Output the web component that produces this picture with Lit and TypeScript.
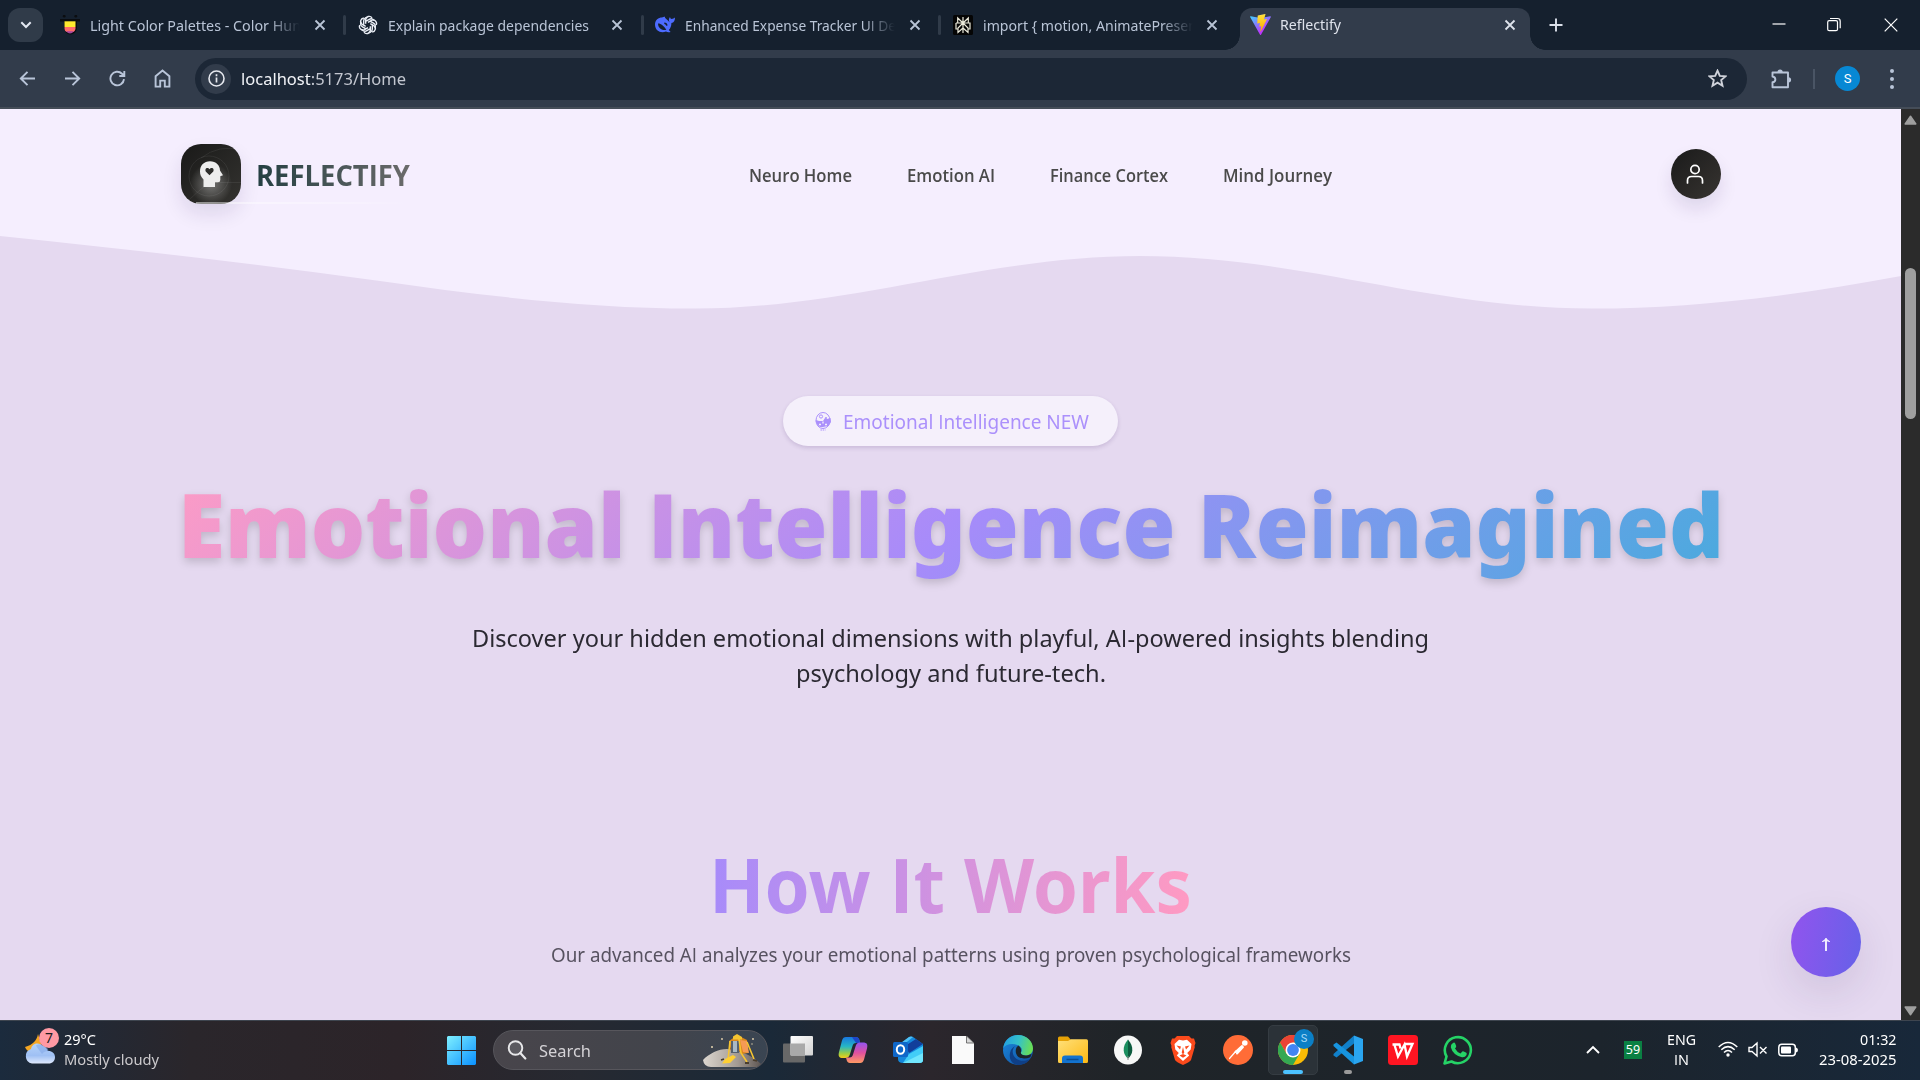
import { LitElement, html, css, svg } from "lit";
import { customElement, property } from "lit/decorators.js";

/** A single line of text set to an exact width. */
@customElement("fit-text")
class FitText extends LitElement {
  @property({ type: Number }) w = 0;
  static styles = css`
    :host {
      display: block;
      flex: none;
      width: max-content;
      white-space: nowrap;
      transform-origin: 0 50%;
    }
  `;
  render() {
    return html`<slot></slot>`;
  }
  firstUpdated() {
    const natural = this.getBoundingClientRect().width;
    if (!this.w || !natural) return;
    this.style.transform = `scaleX(${this.w / natural})`;
    this.style.marginRight = `${this.w - natural}px`;
  }
}

/** Sets every capital I without serifs. */
const plainI = (text: string) =>
  text.split(/(I)/).map((part) => (part === "I" ? html`<span class="cap">I</span>` : part));

const closeIcon = html`<svg class="x" width="12" height="12" viewBox="0 0 12 12"><path d="M1.5 1.5l9 9M10.5 1.5l-9 9" stroke="currentColor" stroke-width="1.8" fill="none"/></svg>`;

const favHunt = html`<svg width="20" height="20" viewBox="0 0 20 20">
  <circle cx="4.2" cy="1.2" r="1.4" fill="#0b0d10"/><circle cx="15.8" cy="1.2" r="1.4" fill="#0b0d10"/>
  <path d="M0 4h20v2.500h-3V13a6 6 0 0 1-13 0V6.500H0z" fill="#0b0d10"/>
  <path d="M4.500 6.300h11V12h-11z" fill="#ffe92e"/><path d="M4.500 12h11v2q-.5 2-2 3h-7q-2-1-2-3z" fill="#ff6b6b"/><path d="M6 16.300h8q-4 4.500-8 0z" fill="#a5469e"/></svg>`;

const favGpt = html`<svg width="20" height="20" viewBox="0 0 24 24" fill="none" stroke="#e9edf5" stroke-width="1.700">
  ${[0, 60, 120, 180, 240, 300].map(
    (a) => svg`<path transform="rotate(${a} 12 12)" d="M9.200 10.400V5.600a4.200 4.200 0 0 1 7.600-2.200M9.200 7.600l4.200-2.400a4.400 4.400 0 0 1 6 1.600"/>`
  )}</svg>`;

const favSeek = html`<svg width="20" height="20" viewBox="0 0 20 20"><path d="M0 9.500C0 5 3.500 2.500 7 2.500c1 0 2-.8 3-.7-.3 1 .5 1.700 1.500 2.400 1.200 1 2.300 2 3.200 3.300C13.500 5.500 13.700 3.500 15 2c.2 1.300.8 1.800 1.600 2C18 4 19 3 20 2.500c0 3-1 5-3.600 5.600 0 3-1 5.400-2.600 7l1.800 1.900c-2 .5-3.500.3-4.600-.5C6 18.600 0 16 0 9.500z" fill="#4d6bfe"/><path d="M3 8.500c2.500-.3 6 2.500 8.300 6.300-3 1-8.300-1-8.300-6.300z" fill="#15202e"/><path d="M9.300 8.200q2.200 0 2.600 2.500" stroke="#15202e" stroke-width="1.500" fill="none"/></svg>`;

const favPerp = html`<svg width="20" height="20" viewBox="0 0 20 20"><rect width="20" height="20" rx="1.500" fill="#050505"/>
  <g stroke="#ecebdc" stroke-width="1.200" fill="none"><path d="M10 2v16M10 8L4.700 3v5M10 8l5.300-5v5M3 8h14v6h-2M5 14H3V8M10 8l-5 5v4.500l5-4.500M10 8l5 5v4.500l-5-4.500"/></g></svg>`;

const favVite = html`<svg width="21" height="21" viewBox="0 0 256 257"><defs><linearGradient id="va" x1="0" y1="0" x2=".6" y2=".8"><stop offset="0" stop-color="#41d1ff"/><stop offset="1" stop-color="#bd34fe"/></linearGradient><linearGradient id="vb" x1=".4" y1="0" x2=".5" y2="1"><stop offset="0" stop-color="#ffea83"/><stop offset=".1" stop-color="#ffdd35"/><stop offset="1" stop-color="#ffa800"/></linearGradient></defs>
  <path fill="url(#va)" d="M255.200 38L134 252.500c-2.500 4.500-9 4.500-11.500 0L.9 38c-2.800-5 1.500-11 7-10l120 21.500h2.300L247 28c5.600-1 10 5 8 10z"/>
  <path fill="url(#vb)" d="M185.400.1L96.400 17.500a3.300 3.300 0 0 0-2.600 3l-5.500 92.500a3.300 3.300 0 0 0 4 3.400l24.800-5.700a3.300 3.300 0 0 1 4 3.900l-7.400 36a3.300 3.300 0 0 0 4.200 3.800l15.300-4.700a3.300 3.300 0 0 1 4.200 3.800l-11.700 56.600c-.7 3.500 4 5.500 6 2.500l1.300-2 72.500-144.700a3.300 3.300 0 0 0-3.500-4.700l-25.500 4.900a3.300 3.300 0 0 1-3.800-4.200L189.200 4a3.300 3.300 0 0 0-3.800-3.900z"/></svg>`;

const tabs = [
  { icon: favHunt, text: "Light Color Palettes - Color Hun", w: 211, fade: true },
  { icon: favGpt, text: "Explain package dependencies", w: 201, fade: false },
  { icon: favSeek, text: "Enhanced Expense Tracker UI De", w: 211, fade: true },
  { icon: favPerp, text: "import { motion, AnimatePresen", w: 214, fade: true },
];

const backI = html`<svg width="17" height="17" viewBox="0 0 17 17"><path d="M16 8.500H2M8.500 1.800L1.800 8.500l6.700 6.700" class="ln"/></svg>`;
const fwdI = html`<svg width="17" height="17" viewBox="0 0 17 17"><path d="M1 8.500h14M8.500 1.800l6.700 6.700-6.700 6.700" class="ln"/></svg>`;
const reloadI = html`<svg width="17" height="17" viewBox="0 0 17 17"><path d="M15 9.200A6.800 6.800 0 1 1 13 3.700l1.800 1.800M15.300 1v5h-5" class="ln"/></svg>`;
const homeI = html`<svg width="17" height="19" viewBox="0 0 17 19"><path d="M1.600 7.300L8.500 1.500l6.900 5.800v10.300h-4.600v-6H6.200v6H1.600z" class="ln"/></svg>`;
const starI = html`<svg width="19" height="19" viewBox="0 0 19 19"><path d="M9.500 1.700l2.300 5.200 5.700.5-4.300 3.700 1.300 5.600-5-3-5 3 1.300-5.600L1.500 7.400l5.700-.5z" class="ln" stroke-linejoin="miter"/></svg>`;
const extI = html`<svg width="22" height="22" viewBox="0 0 22 22"><path d="M2.500 4.500h15.500v14.800H2.500v-5c3.800-.6 3.800-5.200 0-5.800z" class="ln" stroke-linejoin="round"/><path d="M7.500 4a2.600 2.600 0 0 1 5.200 0zM18.500 9.200a2.600 2.600 0 0 1 0 5.200z" fill="#b9c5d9"/></svg>`;

const winI = html`<svg width="29" height="29" viewBox="0 0 29 29"><defs><linearGradient id="wg" x1="0" y1="0" x2="29" y2="29" gradientUnits="userSpaceOnUse"><stop offset="0" stop-color="#7ff0ff"/><stop offset="1" stop-color="#0a90ff"/></linearGradient></defs><path fill="url(#wg)" d="M1 0h13v14H0V1zM15 0h13l1 1v13H15zM0 15h14v14H1l-1-1zM15 15h14v13l-1 1H15z"/></svg>`;

const artI = html`<svg width="58" height="33" viewBox="0 0 58 33"><defs><linearGradient id="mo" x1="0" y1="0" x2="1" y2="0"><stop offset="0" stop-color="#dcd6cf"/><stop offset=".6" stop-color="#a39a92"/><stop offset="1" stop-color="#5e5653"/></linearGradient></defs>
  <path d="M0 26C8 18 20 13 30 16c12 2 22 8 28 14l-4 3H8Q1 33 0 26z" fill="url(#mo)"/>
  <path d="M26 7l7-5h3l8 4 1 13-6 1-3-3-8 1z" fill="#d9871c"/>
  <path d="M28 7h8v12h-8z" fill="#55616f"/><path d="M30 7h4v11h-4z" fill="#a9b9c4"/>
  <path d="M37 6l7 1 2 12-6-1z" fill="#f59a55"/><path d="M27 7l-2 19M36 5l2 14 6 9M44 8l7 17" stroke="#f5c431" stroke-width="1.600" fill="none"/><path d="M30 2.500l4-2.500 5 3v2.500h-9z" fill="#f5c431"/>
  <path d="M22 25l8-4 3 2-6 6-8 .5z" fill="#ffcf33"/><path d="M18 26l3-1M42 29l4 0M50 26l4 1" stroke="#4a3d2c" stroke-width="1.800"/>
  <g fill="#e9d7b2"><circle cx="9" cy="13" r="1"/><circle cx="19" cy="5" r=".9"/><circle cx="50" cy="5" r=".9"/><circle cx="49" cy="10" r=".7"/></g></svg>`;

const weatherI = html`<svg width="36" height="38" viewBox="0 0 36 38"><defs><linearGradient id="cl" x1="0" y1="0" x2="0" y2="1"><stop offset="0" stop-color="#b4d3fa"/><stop offset=".6" stop-color="#9fc0f4"/><stop offset="1" stop-color="#dfe9fc"/></linearGradient></defs>
  <path d="M13 6c-1 6-5 11-13 13 3 7 12 8 18 3z" fill="#f5a623"/>
  <path d="M7 35.500a7.500 7.500 0 0 1-1-14.500C7 15 14 14 17 17.500c4 1 5 3.500 5.500 5.500 4-.5 7.500 2 7.500 6s-2.500 6.500-6.500 6.500z" fill="url(#cl)"/>
  <path d="M11 17.500c3-2 6-1 7.500 0 3 1 4.700 3 5 5.500-3 0-5 1-6.500 3-2-3-4-5-6-8.500z" fill="#84a9e8" opacity=".6"/></svg>`;

const taskView = html`<svg width="30" height="30" viewBox="0 0 30 30"><defs><linearGradient id="tv" x1="0" y1="0" x2="1" y2="1"><stop offset="0" stop-color="#fff"/><stop offset="1" stop-color="#d2d2d2"/></linearGradient></defs><rect x="0" y="8.500" width="22" height="19" rx="1" fill="#686868"/><rect x="7.500" y="1" width="22.500" height="19.500" rx="1" fill="url(#tv)"/><path d="M7.500 8.500H22v12H7.500z" fill="#a9a9a9"/></svg>`;

const copilot = html`<svg width="30" height="30" viewBox="0 0 30 30"><defs><linearGradient id="c1" x1="0" y1="0" x2="0" y2="1"><stop offset="0" stop-color="#1877e0"/><stop offset=".45" stop-color="#27b6c5"/><stop offset=".8" stop-color="#a3cf3e"/><stop offset="1" stop-color="#f4cc1c"/></linearGradient><linearGradient id="c2" x1="0" y1="0" x2="0" y2="1"><stop offset="0" stop-color="#9254f0"/><stop offset=".5" stop-color="#e0509f"/><stop offset="1" stop-color="#ff9a63"/></linearGradient></defs>
  <path d="M8 2h10c2 0 3 1.500 3.500 3.500L22 8h-4c-2 0-3 1-3.500 3l-2.500 8c-.8 2.500-2 4-4.500 4H5c-4 0-5-2-4-6L4 5.500C4.700 3 6 2 8 2z" fill="url(#c1)"/><path d="M14 2h4c2 0 3 1.500 3.500 3.500L22 8h-4z" fill="#1e46c8"/>
  <path d="M22 28H12c-2 0-3-1.500-3.500-3.500L8 22.500h3.500c2 0 3-1 3.500-3l2.500-8c.8-2.500 2-4 4.500-4h3c4 0 5 2 4 6l-3 11c-.7 2.500-2 3.500-4 3.500z" fill="url(#c2)"/></svg>`;

const outlook = html`<svg width="30" height="30" viewBox="0 0 30 30"><path d="M5 11L16 2q2-1 4 0l10 7v15q0 4-4 4H10q-5 0-5-4z" fill="#1488dc"/><path d="M5 10L16 2q2-1 4 0L9 11z" fill="#4fc1f5"/><path d="M12 11L23 4l7 5-14 9z" fill="#123f9b"/><path d="M30 11v14q0 3-4 3H10l6-9z" fill="#42cdf7"/><path d="M10 28l20-10v7q0 3-4 3z" fill="#71e6fd"/><rect x="0" y="7" width="15" height="15" rx="1.500" fill="#0f67c9"/><ellipse cx="7.500" cy="14.500" rx="3.700" ry="4.300" fill="none" stroke="#fff" stroke-width="2"/></svg>`;

const fileI = html`<svg width="22" height="28" viewBox="0 0 22 28"><path d="M0 0h14.500L22 7v21H0z" fill="#fafafa"/><path d="M14.500 0v7H22z" fill="#d8d8d8" stroke="#555" stroke-width=".8"/></svg>`;

const edge = html`<svg width="30" height="30" viewBox="0 0 30 30"><defs><linearGradient id="e1" x1="0" y1=".3" x2="1" y2=".5"><stop offset="0" stop-color="#239fe2"/><stop offset=".5" stop-color="#35c1c9"/><stop offset="1" stop-color="#6be051"/></linearGradient><linearGradient id="e2" x1="0" y1="0" x2="1" y2="1"><stop offset="0" stop-color="#1b8be0"/><stop offset="1" stop-color="#104b9c"/></linearGradient></defs>
  <circle cx="15" cy="15" r="15" fill="url(#e2)"/><path d="M.2 13C1.500 5 7.500 0 15 0c9 0 15 6.500 15 13.500 0 4.500-3.500 7-7.500 7-3.500 0-5-1.500-4.500-3 1.800-2.200.8-6-3.500-7.500C9 8 3 9 .2 13z" fill="url(#e1)"/><path d="M12.500 11c-3.500 2.500-4 8 0 12 4 3.500 10 3.500 14.500 1-3 4.500-8 6-12.500 6C8 29 6 23 7 18c.8-4 3-6 5.500-7z" fill="#0f3f86"/><path d="M15.500 10.500c2.500 2 3 4.500 2.300 7.200.2 2.500 4 3.300 7.200 2.500l3.500-1.200-1.200 3.200C20 25 12 23 12.800 15c.3-2 1.200-3.500 2.700-4.500z" fill="#1d2429"/></svg>`;

const folder = html`<svg width="30" height="28" viewBox="0 0 30 28"><defs><linearGradient id="fo" x1="0" y1="0" x2="1" y2="1"><stop offset="0" stop-color="#ffe07a"/><stop offset="1" stop-color="#fdb913"/></linearGradient></defs><path d="M0 2q0-1.500 1.500-1.500H10L13 4v4H0z" fill="#e6a106"/><path d="M0 5h10l3-1.800h15.500Q30 3.200 30 5v20.500q0 1.500-1.500 1.500h-27Q0 27 0 25.500z" fill="url(#fo)"/><path d="M4 27v-4.500q0-3 3-3h15q3 0 3 3V27z" fill="#1373cf"/><path d="M8.500 23.500h12" stroke="#0a4d93" stroke-width="1.500"/></svg>`;

const mongo = html`<svg width="30" height="30" viewBox="0 0 30 30"><ellipse cx="15" cy="15" rx="14" ry="14.500" fill="#f7f8f7"/><path d="M15 4.500c3 4 4.500 6.500 4.300 11-.2 3.500-2 6-4.300 8z" fill="#0d5c3f"/><path d="M15 4.500c-3 4-4.500 6.500-4.300 11 .2 3.500 2 6 4.300 8z" fill="#1b8f5f"/><path d="M15 21v4" stroke="#888" stroke-width="1"/></svg>`;

const brave = html`<svg width="26" height="30" viewBox="0 0 26 30"><path d="M7 1h12l2.500 2.500 2.500 0L25.500 8l-1 3 .3 1-3.800 13q-1 2-8 5-7-3-8-5L1.200 12l.3-1-1-3L2 3.500l2.500 0z" fill="#fb4a1c"/><path d="M13 5.500l4-.8L21.500 9l-.8 5.500-3.500 3.500 2 2.500-6.200 5.500-6.200-5.500 2-2.500-3.500-3.500L4.500 9 9 4.700z" fill="#fff"/><path d="M6.500 10.500l4.500 1-1 3zM19.500 10.500l-4.500 1 1 3zM13 12l1.300 5.500-1.300 2-1.300-2zM9.500 20.500L13 19l3.500 1.500L13 22.800z" fill="#fb4a1c"/></svg>`;

const postman = html`<svg width="30" height="30" viewBox="0 0 30 30"><circle cx="15" cy="15" r="15" fill="#ff6c37"/><g fill="none" stroke="#fff" stroke-linecap="round"><path d="M6.500 23.500L13 16" stroke-width="1.200"/><path d="M12.500 17L19 11M14 18.500l6-6.500" stroke-width="2"/></g><circle cx="21.800" cy="8" r="2.800" fill="#fff"/></svg>`;

const chrome = html`<svg width="30" height="30" viewBox="0 0 30 30"><circle cx="15" cy="15" r="15" fill="#fbbc05"/><path d="M2 7.500A15 15 0 0 1 28 7.500H15L8.500 18.700z" fill="#ea4335"/><path d="M2 7.500A15 15 0 0 0 15 30l6.500-11.200L8.500 18.700z" fill="#34a853"/><circle cx="15" cy="15" r="7.500" fill="#fff"/><circle cx="15" cy="15" r="5.900" fill="#4285f4"/></svg>`;

const vscode = html`<svg width="30" height="30" viewBox="0 0 30 30"><path d="M21 .5L30 4v22l-9 3.500z" fill="#2aa5f0"/><path d="M21 .5V8.500L3.500 22.500.5 20.500V19z" fill="#1180c9" /><path d="M21 29.500v-8L3.500 7.500.5 9.500V11z" fill="#1795e0"/></svg>`;

const wps = html`<svg width="30" height="30" viewBox="0 0 30 30"><rect width="30" height="30" rx="3.500" fill="#ff1522"/><path d="M4.500 9.500h7l1 4M6.500 10l3.500 11.500 6.500-12 2.500 12 5.500-12.500h-8.500" fill="none" stroke="#fff" stroke-width="2.300"/></svg>`;

const whats = html`<svg width="30" height="30" viewBox="0 0 30 30"><path d="M1.500 28.500l2-7A13 13 0 1 1 8.500 26.500z" fill="none" stroke="#25d366" stroke-width="2.600" stroke-linejoin="round"/><path d="M10 8q1.500-1 2.200.5l1 2.500q.2 1-1.200 2.500 2 3.700 5.500 5l1.800-2q.5-.5 1.500 0l2.500 1.300q.8.500.2 2.200-1.500 2.700-4.500 2.200-9-2-11.200-10Q7.500 9.500 10 8z" fill="#25d366"/></svg>`;

const apps = [taskView, copilot, outlook, fileI, edge, folder, mongo, brave, postman, chrome, vscode, wps, whats];

@customElement("app-root")
class AppRoot extends LitElement {
  static styles = css`
    :host {
      display: flex;
      flex-direction: column;
      width: 1920px;
      height: 1080px;
      overflow: hidden;
      font-family: "Noto Sans", "Open Sans", sans-serif;
    }
    * { box-sizing: border-box; }
    svg { display: block; flex: none; }
    .ln { fill: none; stroke: #b9c5d9; stroke-width: 1.9; }
    .cap { font-family: "Open Sans", sans-serif; }

    .strip { display: flex; height: 50px; flex: none; background: #15202e; padding-left: 8px; }
    .drop { width: 35px; height: 34px; margin: 8px 3.5px 0 0; border-radius: 12px; background: #303b49; display: grid; place-items: center; flex: none; }
    .tab { display: flex; align-items: center; width: 297.5px; flex: none; padding: 0 0 0 13.5px; color: #b9c4d6; font-size: 14.3px; line-height: 20px; }
    .tab .name { width: 212px; margin-left: 10px; overflow: hidden; flex: none; padding-top: 1px; }
    .tab .fade { -webkit-mask-image: linear-gradient(90deg, #000 84%, transparent 99%); mask-image: linear-gradient(90deg, #000 84%, transparent 99%); }
    .x { margin-left: 11.500px; }
    .sep { width: 3px; height: 20px; border-radius: 2px; background: #303b49; margin-left: auto; margin-right: -2px; }
    .active { position: relative; width: 290px; margin-left: 3.5px; margin-top: 8px; padding: 0 0 9px 10px; background: #323c4b; border-radius: 12px 12px 0 0; color: #dfe3ec; }
    .active .name { margin-left: 9px; }
    .active::before, .active::after { content: ""; position: absolute; bottom: 0; width: 15px; height: 15px; }
    .active::before { left: -15px; background: radial-gradient(circle at 0 0, transparent 14.5px, #323c4b 15px); }
    .active::after { right: -15px; background: radial-gradient(circle at 100% 0, transparent 14.5px, #323c4b 15px); }
    .plus { margin: 18px 0 0 19px; }
    .wins { display: flex; margin-left: auto; padding: 17px 22px 0 0; gap: 43px; }
    .wins svg:first-child { margin-right: -1.500px; }

    .bar { display: flex; align-items: center; height: 59px; flex: none; background: #323c4b; border-bottom: 2px solid #454d58; padding-left: 5.5px; }
    .tool { width: 44.9px; display: grid; place-items: center; flex: none; }
    .url { display: flex; align-items: center; width: 1552px; height: 42px; margin-left: 10px; border-radius: 21px; background: #1c2736; color: #c3c7d0; font-size: 17px; line-height: 24px; padding: 0 20px 0 6px; flex: none; }
    .url fit-text { padding-top: 1px; }
    .info { width: 30px; height: 30px; border-radius: 50%; background: #323c4b; display: grid; place-items: center; margin-right: 10px; }
    .url .ln { stroke: #cfd2da; }
    .url b { font-weight: 400; color: #f1f3f7; }
    .url .star { margin-left: auto; }
    .ext { width: 66px; display: grid; place-items: center; padding-left: 2px; flex: none; }
    .bsep { width: 2px; height: 20px; background: #4a5565; flex: none; }
    .me { width: 25px; height: 25px; flex: none; margin: 0 0 0 20px; border-radius: 50%; background: #0788d4; color: #fff; font: 13px/25px Roboto, sans-serif; text-align: center; }
    .dots { display: grid; gap: 4px; margin-left: 30px; }
    .dots i { width: 4px; height: 4px; border-radius: 50%; background: #b9c5d9; }

    .view { display: flex; flex: none; height: 911px; }
    .page { position: relative; width: 1901px; background: #e5d9f0; }
    .wave { position: absolute; left: 0; top: 0; }
    header { position: relative; display: flex; height: 111px; padding: 35px 180px 0 181px; font-family: "Open Sans", sans-serif; }
    .logo { width: 60px; height: 60px; border-radius: 20px; box-shadow: 0 10px 20px rgba(40, 20, 80, 0.11); }
    .logo svg { border-radius: 20px; }
    .brand { width: 170px; height: 60px; padding: 10.500px 0 0 15px; }
    .brand fit-text { font-size: 29px; font-weight: 700; line-height: 40px; background: linear-gradient(90deg, #243f42, #6b6b6b); -webkit-background-clip: text; background-clip: text; color: transparent; }
    .brand hr { border: 0; height: 2px; margin: 7.5px 0 0 -60px; width: 215px; background: linear-gradient(90deg, rgba(255,255,255,.5), rgba(255,255,255,.2) 75%, transparent); }
    nav { display: flex; margin-left: 338px; gap: 55px; color: #4a4a4a; font-size: 17.5px; font-weight: 600; line-height: 30px; padding-top: 15.500px; }
    .user { width: 50px; height: 50px; margin: 5px 0 0 auto; border-radius: 50%; background: linear-gradient(135deg, #1a1a1a, #373431); box-shadow: 0 10px 18px rgba(40, 20, 80, 0.11); display: grid; place-items: center; }
    main { position: relative; display: flex; flex-direction: column; align-items: center; padding-top: 176px; }
    .badge { display: flex; align-items: center; width: 335px; height: 50px; border-radius: 25px; background: #f5f0fb; box-shadow: 0 2px 4px rgba(60, 30, 100, 0.16); padding-left: 32px; color: #ab90fb; font-size: 19.3px; line-height: 30px; gap: 12px; }
    .badge fit-text { padding-top: 2px; }
    .hero { display: flex; margin-top: 8px; filter: drop-shadow(0 4px 4px rgba(0, 0, 0, 0.16)); }
    .hero fit-text { font-size: 88px; font-weight: 900; line-height: 140px; background: linear-gradient(135deg, #ff9cc4, #a78bfa 50%, #48abdd); -webkit-background-clip: text; background-clip: text; color: transparent; }
    .lead { margin-top: 26px; font-size: 24px; line-height: 35px; color: #2b2932; display: grid; justify-items: center; }
    .how { margin-top: 149px; font-size: 75px; font-weight: 700; line-height: 90px; background: linear-gradient(90deg, #a78bfa, #ff9ac2); -webkit-background-clip: text; background-clip: text; color: transparent; }
    .sub { margin-top: 11px; font-size: 19.2px; line-height: 30px; color: #575260; }
    .fab { position: absolute; right: 40px; bottom: 43px; width: 70px; height: 70px; border-radius: 50%; background: linear-gradient(100deg, #9254ee, #6561e8); box-shadow: 0 15px 40px rgba(60, 30, 90, 0.12); display: grid; place-items: center; padding-top: 4px; }
    .scroll { width: 19px; background: #2b2b2b; display: flex; flex-direction: column; align-items: center; padding: 6px 0 4px; }
    .thumb { width: 11px; height: 151px; margin: 143px 0 auto; border-radius: 6px; background: #9f9f9f; }

    .task { display: flex; height: 60px; flex: none; border-top: 1px solid #3e454f; color: #fff; font-size: 15px; line-height: 20px;
      background: linear-gradient(90deg, #1b2b3d 0, #2a262b 190px, #2c2429 400px, #262931 580px, #1a2938 770px, #2b262c 930px, #1f2428 1130px, #1c242c 1600px, #18283a 1920px); }
    .weather { position: relative; display: flex; width: 447px; padding: 7px 0 0 25px; }
    .weather .lines, .clock, .lang { display: grid; align-content: start; padding-top: 1px; }
    .weather .lines { margin-left: 3px; }
    .weather .c2 { color: #cbc9cc; }
    .cnt { position: absolute; left: 39px; top: 7px; width: 20px; height: 20px; border-radius: 50%; background: #ff99a4; color: #1d1d1f; text-align: center; font-size: 14px; line-height: 20px; }
    .start { padding-top: 15px; width: 46px; }
    .search { display: flex; align-items: center; width: 275px; height: 40px; margin-top: 9px; border-radius: 20px; border: 1px solid #57565c; background: linear-gradient(90deg, #48454b, #42444b 60%, #3a4552); padding: 0 6px 0 13px; color: #d4d2d6; font-size: 16.500px; }
    .search fit-text { margin-left: 12px; padding-top: 1px; }
    .search .art { margin-left: auto; }
    .apps { display: flex; margin-left: 2.5px; padding-top: 4px; }
    .app { position: relative; width: 50px; height: 50px; margin: 0 2.5px; display: grid; place-items: center; border-radius: 5px; }
    .app.on { background: #2b3238; border: 1px solid #353c42; }
    .pill { position: absolute; left: 14px; bottom: 0; width: 20px; height: 4px; border-radius: 2px; background: #4cc2ff; }
    .dot { position: absolute; left: 21px; bottom: 1px; width: 8px; height: 4px; border-radius: 2px; background: #9b9b9b; }
    .pf { position: absolute; right: 3px; top: 3px; width: 20px; height: 20px; border-radius: 50%; background: #0b7fc6; color: #a8daf8; font: 11px/20px Roboto, sans-serif; text-align: center; }
    .tray { display: flex; margin-left: auto; padding-right: 24px; }
    .tray > svg { margin-top: 20px; }
    .wifi { margin-left: 17px; }
    .vol, .bat { margin-left: 10px; }
    .lang, .clock { width: 40px; padding-top: 7.500px; justify-items: center; }
    .clock { width: 78px; justify-items: end; margin-left: 20px; }
    .n59 { width: 18px; height: 18px; margin: 20px 19px 0 24px; background: #0a8043; font-size: 12.500px; line-height: 18px; text-align: center; }
  `;

  render() {
    return html`
      <div class="strip">
        <div class="drop"><svg width="12" height="8" viewBox="0 0 12 8"><path d="M1.300 1.300L6 6l4.700-4.700" fill="none" stroke="#e3e8f2" stroke-width="2"/></svg></div>
        ${tabs.map(
          (t, i) => html`<div class="tab">${t.icon}
            <div class="name ${t.fade ? "fade" : ""}"><fit-text w=${t.w}>${plainI(t.text)}</fit-text></div>
            ${closeIcon}${i < 3 ? html`<div class="sep"></div>` : ""}</div>`
        )}
        <div class="tab active">${favVite}<div class="name"><fit-text w="61">Reflectify</fit-text></div>${closeIcon}</div>
        <svg class="plus" width="14" height="14" viewBox="0 0 14 14"><path d="M7 .5v13M.5 7h13" stroke="#dbe0ea" stroke-width="1.900"/></svg>
        <div class="wins">
          <svg width="14" height="16" viewBox="0 0 14 16"><path d="M.5 7h13" stroke="#fff" stroke-width="1.200"/></svg>
          <svg width="14" height="16" viewBox="0 0 14 16" fill="none" stroke="#fff" stroke-width="1.200"><rect x=".7" y="3.700" width="9.800" height="10" rx="1.500"/><path d="M3 1.500h7.500q2.700 0 2.700 2.700v7"/></svg>
          <svg width="14" height="16" viewBox="0 0 14 16"><path d="M.7 1.700l12.600 12.600M13.300 1.700L.7 14.300" stroke="#fff" stroke-width="1.200"/></svg>
        </div>
      </div>

      <div class="bar">
        ${[backI, fwdI, reloadI, homeI].map((i) => html`<div class="tool">${i}</div>`)}
        <div class="url">
          <div class="info"><svg width="17" height="17" viewBox="0 0 17 17"><circle cx="8.500" cy="8.500" r="7.500" fill="none" stroke="#e6e8ee" stroke-width="1.600"/><path d="M8.500 7.500v5M8.500 4.300v1.900" stroke="#e6e8ee" stroke-width="1.700"/></svg></div>
          <fit-text w="165"><b>localhost</b>:5173/Home</fit-text>
          <div class="star">${starI}</div>
        </div>
        <div class="ext">${extI}</div>
        <div class="bsep"></div>
        <div class="me">S</div>
        <div class="dots"><i></i><i></i><i></i></div>
      </div>

      <div class="view">
        <div class="page">
          <svg class="wave" width="1901" height="220" viewBox="0 109 1901 220"><path d="M0 109H1901V276C1795 296 1690 308.500 1592 308.500C1430 308.500 1300 256 1140 256C985 256 850 308.500 695 308.500C590 308.500 485 296 380 281C250 263 125 249 0 236Z" fill="#f5eefe"/></svg>
          <header>
            <div class="logo"><svg width="60" height="60" viewBox="0 0 60 60"><defs><linearGradient id="lg" x1="0" y1="0" x2="1" y2="1"><stop offset="0" stop-color="#191918"/><stop offset="1" stop-color="#343330"/></linearGradient><radialGradient id="glow"><stop offset="0" stop-color="#fff" stop-opacity=".36"/><stop offset="1" stop-color="#fff" stop-opacity="0"/></radialGradient></defs>
              <rect width="60" height="60" fill="url(#lg)"/>
              <g fill="none" stroke="#fff" stroke-opacity=".07"><circle cx="28" cy="32" r="20"/><path d="M20 14Q38 0 60 6M34 38.500h26M8 56q8-8 16-14"/></g>
              <circle cx="30" cy="40" r="21" fill="url(#glow)"/>
              <path d="M22.500 43V35.500C20 33 19 30.500 19 27.500C19 21.500 23 17.300 29 17.300C35 17.300 39 21.500 39 26.500L42 31.300L39.300 32.300V36Q39.300 38.300 37 38.300H34V43Z" fill="#ededed"/>
              <path d="M28.500 31.300l-3.800-3.800q-1-2.500 1-3.500 1.700-.5 2.800 1.200 1.100-1.700 2.800-1.200 2 1 1 3.500z" fill="#2e2e2c"/></svg></div>
            <div class="brand"><fit-text w="154">REFLECTIFY</fit-text><hr /></div>
            <nav>
              <fit-text w="103">Neuro Home</fit-text>
              <fit-text w="88">Emotion AI</fit-text>
              <fit-text w="118">Finance Cortex</fit-text>
              <fit-text w="109">Mind Journey</fit-text>
            </nav>
            <div class="user"><svg width="24" height="24" viewBox="0 0 24 24" fill="none" stroke="#fff" stroke-width="1.700" stroke-linecap="round"><circle cx="11" cy="7.500" r="4.200"/><path d="M3.500 21v-2.500q0-4 4-4h7q4 0 4 4V21"/></svg></div>
          </header>
          <main>
            <div class="badge">
              <svg width="16" height="19" viewBox="0 0 16 19"><ellipse cx="8" cy="8.500" rx="7" ry="8" fill="none" stroke="#ab90fb" stroke-width="1"/><path d="M1 8l3 1 4 0 2-3 2 1 3.500-1 .5 4-2.500 4-3 .5L8 15l-3 0-3-2.500L.6 9z" fill="#ab90fb"/><circle cx="6" cy="4.500" r="1.600" fill="none" stroke="#ab90fb"/><circle cx="11" cy="6" r="1" fill="#ab90fb"/><path d="M4 12.500h2M10 12.500h2M8 9.500v2" stroke="#f5f0fb" stroke-width="1.300"/><path d="M5.500 18h5" stroke="#ab90fb" stroke-width="1" stroke-dasharray="1.500 .7"/></svg>
              <fit-text w="246">${plainI("Emotional Intelligence NEW")}</fit-text>
            </div>
            <div class="hero"><fit-text w="1546">${plainI("Emotional Intelligence Reimagined")}</fit-text></div>
            <div class="lead">
              <fit-text w="957">${plainI("Discover your hidden emotional dimensions with playful, AI-powered insights blending")}</fit-text>
              <fit-text w="310">psychology and future-tech.</fit-text>
            </div>
            <fit-text class="how" w="483">${plainI("How It Works")}</fit-text>
            <fit-text class="sub" w="800">${plainI("Our advanced AI analyzes your emotional patterns using proven psychological frameworks")}</fit-text>
          </main>
          <div class="fab"><svg width="10" height="16" viewBox="0 0 10 16"><path d="M5 15V3.500" stroke="#f5f3ff" stroke-width="1.900"/><path d="M1.200 5.600Q4 4.500 5 2 6 4.500 8.800 5.600L5 4.600z" fill="#f5f3ff" stroke="#f5f3ff" stroke-width=".8"/></svg></div>
        </div>
        <div class="scroll">
          <svg width="13" height="10" viewBox="0 0 13 10"><path d="M6.500 1.300L11.800 9H1.200z" fill="#9f9f9f" stroke="#9f9f9f" stroke-width="1.500" stroke-linejoin="round"/></svg>
          <div class="thumb"></div>
          <svg width="13" height="10" viewBox="0 0 13 10"><path d="M6.500 8.700L11.800 1H1.200z" fill="#9f9f9f" stroke="#9f9f9f" stroke-width="1.500" stroke-linejoin="round"/></svg>
        </div>
      </div>

      <div class="task">
        <div class="weather">${weatherI}
          <div class="cnt">7</div>
          <div class="lines"><fit-text w="32">29°C</fit-text><fit-text class="c2" w="95">Mostly cloudy</fit-text></div>
        </div>
        <div class="start">${winI}</div>
        <div class="search">
          <svg width="20" height="20" viewBox="0 0 20 20"><circle cx="8.500" cy="8" r="6.800" fill="#5b5a60" stroke="#e8e8ea" stroke-width="1.900"/><path d="M13.300 13l5 5.500" stroke="#e8e8ea" stroke-width="2.200" stroke-linecap="round"/></svg>
          <fit-text w="52">Search</fit-text>
          <div class="art">${artI}</div>
        </div>
        <div class="apps">
          ${apps.map(
            (a, i) => html`<div class="app ${i === 9 ? "on" : ""}">${a}
              ${i === 9 ? html`<div class="pf">S</div><div class="pill"></div>` : ""}
              ${i === 10 ? html`<div class="dot"></div>` : ""}</div>`
          )}
        </div>
        <div class="tray">
          <svg width="14" height="18" viewBox="0 0 14 18"><path d="M1 12l6-6 6 6" fill="none" stroke="#fff" stroke-width="1.900"/></svg>
          <div class="n59">59</div>
          <div class="lang"><fit-text w="29">ENG</fit-text><fit-text w="15">${plainI("IN")}</fit-text></div>
          <svg class="wifi" width="20" height="16" viewBox="0 0 20 16" fill="none" stroke="#fff" stroke-width="1.500"><path d="M.7 6Q10-3 19.300 6M3.300 8.800q6.700-6.400 13.400 0M6 11.500q4-4 8 0"/><circle cx="10" cy="14" r="1.700" fill="#fff" stroke="none"/></svg>
          <svg class="vol" width="20" height="18" viewBox="0 0 20 18" fill="none" stroke="#fff" stroke-width="1.400"><path d="M1 6.500h3l5-4.500v13l-5-4.500H1zM12 6l6.500 6.500M18.500 6L12 12.500"/></svg>
          <svg class="bat" width="20" height="18" viewBox="0 0 20 18"><rect x=".8" y="3.300" width="16.500" height="11.400" rx="3" fill="none" stroke="#fff" stroke-width="1.500"/><rect x="3" y="5.500" width="10" height="7" rx="1" fill="#fff"/><path d="M18 6.500q2 .5 2 2.500t-2 2.500z" fill="#fff"/></svg>
          <div class="clock"><fit-text w="36.500">01:32</fit-text><fit-text w="77.500">23-08-2025</fit-text></div>
        </div>
      </div>
    `;
  }
}
